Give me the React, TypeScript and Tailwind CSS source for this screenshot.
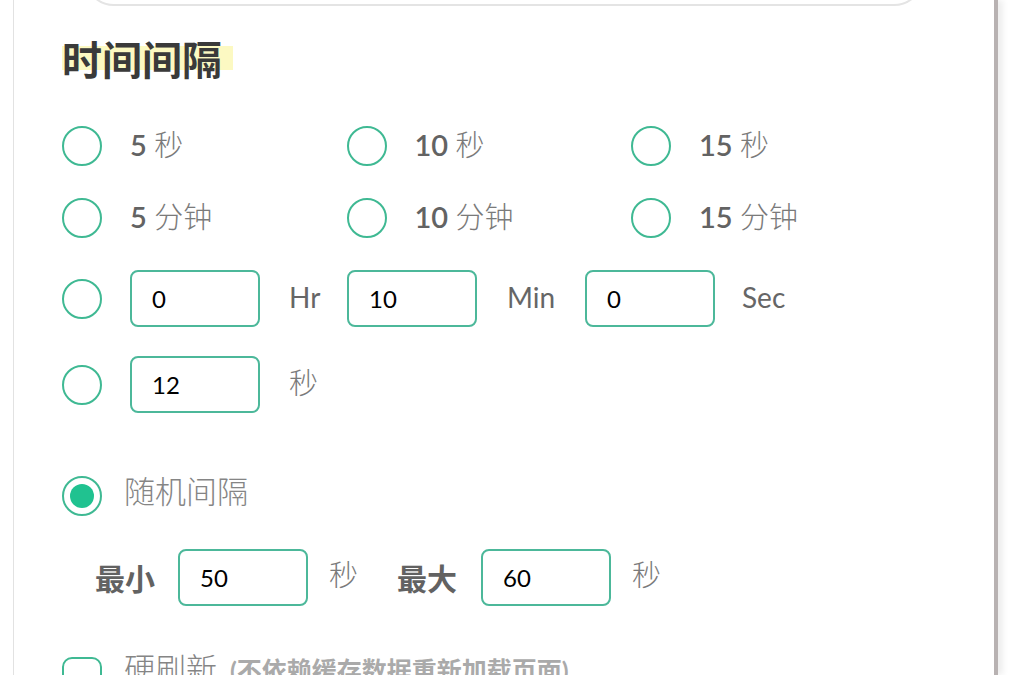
const cjk = "font-['Lato','Noto_Sans_CJK_SC',sans-serif]";

const Radio = ({ checked = false }: { checked?: boolean }) => (
  <div className="w-[40px] h-[40px] shrink-0 rounded-full border-2 border-[#3fb993] flex items-center justify-center">
    {checked && <div className="w-[24px] h-[24px] rounded-full bg-[#20c290]" />}
  </div>
);

const Field = ({ value, className = "" }: { value: string; className?: string }) => (
  <div
    className={`w-[130px] h-[57px] shrink-0 rounded-[8px] border-2 border-[#4cb89a] flex items-center pl-[20px] text-[24px] text-black ${className}`}
  >
    {value}
  </div>
);

const Option = ({ num, unit }: { num: string; unit: string }) => (
  <div className="w-[284.5px] flex items-center">
    <Radio />
    <span className="ml-[28px] mb-[3px] text-[29px] leading-none">
      <span className="font-semibold text-[#636363]">{num}</span>{" "}
      <span className="font-light text-[#7a7a7a]">{unit}</span>
    </span>
  </div>
);

const App = () => {
  return (
    <div className={`w-[1012px] h-[675px] bg-white overflow-hidden flex ${cjk}`}>
      <div className="ml-[13px] w-[985px] h-full border-l border-l-[#e2e2e2] border-r-4 border-r-[#b8b2b2] shadow-[5px_0_6px_rgba(0,0,0,0.07)] flex flex-col">
        {/* bottom of the field above */}
        <div className="mx-[70px] h-[60px] -mt-[54px] rounded-[40px] border-2 border-[#e4e4e4] shrink-0" />

        <div className="pl-[48px] mt-[28px] h-[48px] flex items-center">
          <span className="pr-[11px] text-[40px] leading-[48px] font-bold text-[#3a3a3a] font-['Noto_Sans_CJK_SC',sans-serif] bg-[linear-gradient(transparent_24%,#fcf9c2_24%,#fcf9c2_75%,transparent_75%)]">
            时间间隔
          </span>
        </div>

        <div className="pl-[48px] mt-[44px] flex">
          <Option num="5" unit="秒" />
          <Option num="10" unit="秒" />
          <Option num="15" unit="秒" />
        </div>

        <div className="pl-[48px] mt-[32px] flex">
          <Option num="5" unit="分钟" />
          <Option num="10" unit="分钟" />
          <Option num="15" unit="分钟" />
        </div>

        <div className="pl-[48px] mt-[32px] h-[57px] flex items-center text-[28px] leading-none text-[#666]">
          <Radio />
          <Field value="0" className="ml-[28px]" />
          <span className="ml-[29px] mb-[3px] w-[58px]">Hr</span>
          <Field value="10" />
          <span className="ml-[30px] mb-[3px] w-[78px]">Min</span>
          <Field value="0" />
          <span className="ml-[27px] mb-[3px]">Sec</span>
        </div>

        <div className="pl-[48px] mt-[29px] h-[57px] flex items-center">
          <Radio />
          <Field value="12" className="ml-[28px]" />
          <span className="ml-[29px] mb-[4px] text-[29px] leading-none font-light text-[#7a7a7a]">秒</span>
        </div>

        <div className="pl-[48px] mt-[63px] h-[40px] flex items-center">
          <Radio checked />
          <span className="ml-[22px] mb-[10px] text-[31px] leading-none font-light text-[#858585]">随机间隔</span>
        </div>

        <div className="pl-[81px] mt-[33px] h-[57px] flex items-center">
          <span className="w-[83px] text-[30px] leading-none font-bold text-[#626262]">最小</span>
          <Field value="50" />
          <span className="ml-[21px] mb-[6px] w-[68px] text-[29px] leading-none font-light text-[#7a7a7a]">秒</span>
          <span className="w-[84px] text-[30px] leading-none font-bold text-[#626262]">最大</span>
          <Field value="60" />
          <span className="ml-[21px] mb-[6px] text-[29px] leading-none font-light text-[#7a7a7a]">秒</span>
        </div>

        <div className="pl-[48px] mt-[51px] flex items-start">
          <div className="w-[40px] h-[40px] shrink-0 rounded-[10px] border-2 border-[#3fb993]" />
          <span className="ml-[22px] -mt-[4px] text-[31px] leading-none font-light text-[#858585]">硬刷新</span>
          <span className="ml-[13px] mt-[1px] text-[25px] leading-none font-bold text-[#aaa]">(不依赖缓存数据重新加载页面)</span>
        </div>
      </div>
    </div>
  );
};

export default App;
